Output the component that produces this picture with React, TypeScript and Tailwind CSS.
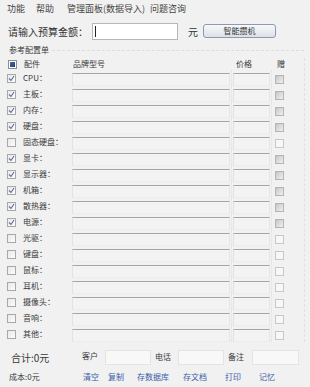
import React from 'react';

const parts = [
  { name: 'CPU', on: true },
  { name: '主板', on: true },
  { name: '内存', on: true },
  { name: '硬盘', on: true },
  { name: '固态硬盘', on: false },
  { name: '显卡', on: true },
  { name: '显示器', on: true },
  { name: '机箱', on: true },
  { name: '散热器', on: true },
  { name: '电源', on: true },
  { name: '光驱', on: false },
  { name: '键盘', on: false },
  { name: '鼠标', on: false },
  { name: '耳机', on: false },
  { name: '摄像头', on: false },
  { name: '音响', on: false },
  { name: '其他', on: false },
];

const actions = [
  { label: '清空', w: 'w-[25px]' },
  { label: '复制', w: 'w-[29px]' },
  { label: '存数据库', w: 'w-[46px]' },
  { label: '存文档', w: 'w-[42px]' },
  { label: '打印', w: 'w-[34px]' },
  { label: '记忆', w: 'w-[20px]' },
];

function Check({ on }: { on: boolean }) {
  return (
    <div className="w-[9px] h-[9px] shrink-0 border border-[#a8a8a8] bg-gradient-to-br from-[#e8e8e8] to-[#fbfbfb] flex items-center justify-center">
      {on && (
        <svg width="7" height="7" viewBox="0 0 7 7">
          <path d="M1 3.5 L3 5.5 L6 1" stroke="#5a6c9e" strokeWidth="1.1" fill="none" />
        </svg>
      )}
    </div>
  );
}

function GiftCheck({ on }: { on: boolean }) {
  return on ? (
    <div className="w-[9px] h-[9px] border border-[#b4b4b4] bg-gradient-to-br from-[#c6c6c6] to-[#f2f2f2]" />
  ) : (
    <div className="w-[9px] h-[9px] border border-[#c8c8c8] bg-[#f7f7f7]" />
  );
}

function Field({ className }: { className: string }) {
  return (
    <div
      className={`h-[13px] border border-t-[#a6a6a6] border-l-[#e2e2e2] border-r-[#e6e6e6] border-b-[#ececec] bg-[#f3f3f3] ${className}`}
    />
  );
}

export default function App() {
  return (
    <div
      className="w-[310px] h-[387px] overflow-hidden bg-[#f1f1f1] text-[#3a3a3a]"
      style={{ fontFamily: '"Noto Sans CJK SC", "Noto Sans", sans-serif' }}
    >
      {/* Menu */}
      <div className="h-[17px] flex items-center text-[9px] text-[#444]">
        <span className="ml-[7px] w-[29px]">功能</span>
        <span className="w-[31px]">帮助</span>
        <span className="w-[83px]">管理面板(数据导入)</span>
        <span>问题咨询</span>
      </div>

      {/* Budget */}
      <div className="mt-[5px] h-[18px] flex items-center text-[10px] text-[#333]">
        <span className="ml-[8px] w-[84px]">请输入预算金额：</span>
        <div className="w-[86px] h-[17px] border border-[#b5b7bd] bg-white flex items-center">
          <div className="ml-[2px] w-px h-[11px] bg-[#222]" />
        </div>
        <span className="ml-[10px] w-[15px]">元</span>
        <button className="w-[73px] h-[14px] rounded-[3px] border border-[#8b9aae] bg-gradient-to-b from-[#f7f8fa] to-[#dde1e6] text-[8px] leading-none flex items-center justify-center">
          智能攒机
        </button>
      </div>

      {/* Group title */}
      <div className="mt-[5px] h-[10px] flex items-center text-[8px]">
        <span className="ml-[9px] w-[43px]">参考配置单</span>
        <div className="flex-1 mr-[6px] border-t border-dashed border-[#dcdcdc]" />
      </div>

      {/* Table */}
      <div className="w-[305px] border-r border-dashed border-[#e0e0e0]">
        <div className="mt-[3px] h-[12px] flex items-center text-[8px]">
          <div className="ml-[8px] w-[9px] h-[9px] border border-[#8f8f8f] bg-white p-px">
            <div className="w-full h-full bg-gradient-to-br from-[#4a6aa8] to-[#1f3f7c]" />
          </div>
          <span className="ml-[7px] w-[49px]">配件</span>
          <span className="w-[163px]">品牌型号</span>
          <span className="w-[41px]">价格</span>
          <span>赠</span>
        </div>

        {parts.map((p) => (
          <div key={p.name} className="h-[16px] flex items-center text-[8px]">
            <div className="ml-[7px]">
              <Check on={p.on} />
            </div>
            <span className="ml-[7px] w-[49px] whitespace-nowrap">{p.name}：</span>
            <div className="w-[160px] h-full flex items-end border-r border-dashed border-[#e4e4e4]">
              <Field className="w-[158px]" />
            </div>
            <div className="w-[40px] h-full flex items-end border-r border-dashed border-[#e4e4e4]">
              <Field className="ml-[1px] w-[37px]" />
            </div>
            <div className="ml-[3px] mt-[3px]">
              <GiftCheck on={p.on} />
            </div>
          </div>
        ))}
      </div>

      {/* Totals */}
      <div className="mt-[6px] h-[18px] flex items-center text-[9px]">
        <span className="ml-[11px] w-[71px] text-[10px]">合计:0元</span>
        <span className="w-[23px] text-[8px] -mt-[3px]">客户</span>
        <div className="w-[46px] h-[15px] border border-[#e4e4e4] bg-[#f8f8f8]" />
        <span className="ml-[4px] w-[23px] text-[8px]">电话</span>
        <div className="w-[46px] h-[15px] border border-[#e4e4e4] bg-[#f8f8f8]" />
        <span className="ml-[4px] w-[24px] text-[8px]">备注</span>
        <div className="w-[47px] h-[15px] border border-[#e4e4e4] bg-[#f8f8f8]" />
      </div>

      <div className="mt-[2px] h-[18px] flex items-center text-[8px]">
        <span className="ml-[9px] w-[74px]">成本:0元</span>
        {actions.map((a) => (
          <span key={a.label} className={`${a.w} whitespace-nowrap text-[#3a5ca8]`}>
            {a.label}
          </span>
        ))}
      </div>
    </div>
  );
}
